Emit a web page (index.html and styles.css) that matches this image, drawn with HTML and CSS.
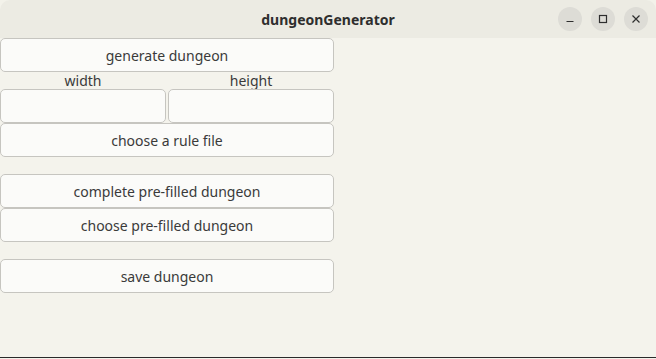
FILE: index.html
```html
<!DOCTYPE html>
<html lang="en">
<head>
    <meta charset="UTF-8">
    <title>dungeonGenerator</title>
    <link rel="stylesheet" href="styles.css">
</head>
<body>
    <div class="window">
        <div class="titlebar">
            <span class="title">dungeonGenerator</span>
            <div class="controls">
                <span class="ctl">
                    <svg width="12" height="12" viewBox="0 0 12 12"><path d="M2.5 8.5h7" stroke="#2e2e2e" stroke-width="1.2"/></svg>
                </span>
                <span class="ctl">
                    <svg width="12" height="12" viewBox="0 0 12 12"><rect x="2.5" y="2.5" width="7" height="7" fill="none" stroke="#2e2e2e" stroke-width="1.2"/></svg>
                </span>
                <span class="ctl">
                    <svg width="12" height="12" viewBox="0 0 12 12"><path d="M2.5 2.5l7 7M9.5 2.5l-7 7" stroke="#2e2e2e" stroke-width="1.2"/></svg>
                </span>
            </div>
        </div>

        <div class="content">
            <button class="btn wide">generate dungeon</button>
            <div class="label">width</div>
            <div class="label">height</div>
            <input class="entry" type="text">
            <input class="entry" type="text">
            <button class="btn wide">choose a rule file</button>
            <div class="spacer"></div>
            <button class="btn wide">complete pre-filled dungeon</button>
            <button class="btn wide">choose pre-filled dungeon</button>
            <div class="spacer"></div>
            <button class="btn wide">save dungeon</button>
        </div>
    </div>
</body>
</html>
```

FILE: styles.css
```css
html, body {
    margin: 0;
    height: 100%;
    background: #f3f2ea;
}

body {
    font-family: 'Noto Sans', 'DejaVu Sans', sans-serif;
    color: #3a3a3a;
}

.window {
    height: 358px;
    box-sizing: border-box;
    background: #f4f3ec;
    border-radius: 10px 10px 0 0;
    border-bottom: 1px solid #2a2a2a;
    overflow: hidden;
}

.titlebar {
    height: 38px;
    background: #ecebe3;
    display: flex;
    align-items: center;
    justify-content: center;
    position: relative;
}

.title {
    font-weight: bold;
    font-size: 14px;
    color: #2e2e2e;
}

.controls {
    position: absolute;
    right: 8px;
    top: 7px;
    display: flex;
    gap: 9px;
}

.ctl {
    width: 24px;
    height: 24px;
    border-radius: 50%;
    background: #dddcd6;
    display: flex;
    align-items: center;
    justify-content: center;
}

.content {
    width: 334px;
    display: grid;
    grid-template-columns: minmax(0, 1fr) minmax(0, 1fr);
    column-gap: 2px;
}

.btn {
    font-family: inherit;
    font-size: 14px;
    color: #3a3a3a;
    background: #fbfbf9;
    border: 1px solid #c6c5c0;
    border-radius: 5px;
    height: 34px;
    padding: 0;
    margin: 0;
}

.wide {
    grid-column: 1 / 3;
}

.label {
    height: 17px;
    line-height: 17px;
    text-align: center;
    font-size: 14px;
}

.entry {
    width: 100%;
    min-width: 0;
    height: 34px;
    box-sizing: border-box;
    margin: 0;
    background: #fbfbf9;
    border: 1px solid #c6c5c0;
    border-radius: 5px;
    font-family: inherit;
    font-size: 14px;
}

.spacer {
    grid-column: 1 / 3;
    height: 17px;
}
```
